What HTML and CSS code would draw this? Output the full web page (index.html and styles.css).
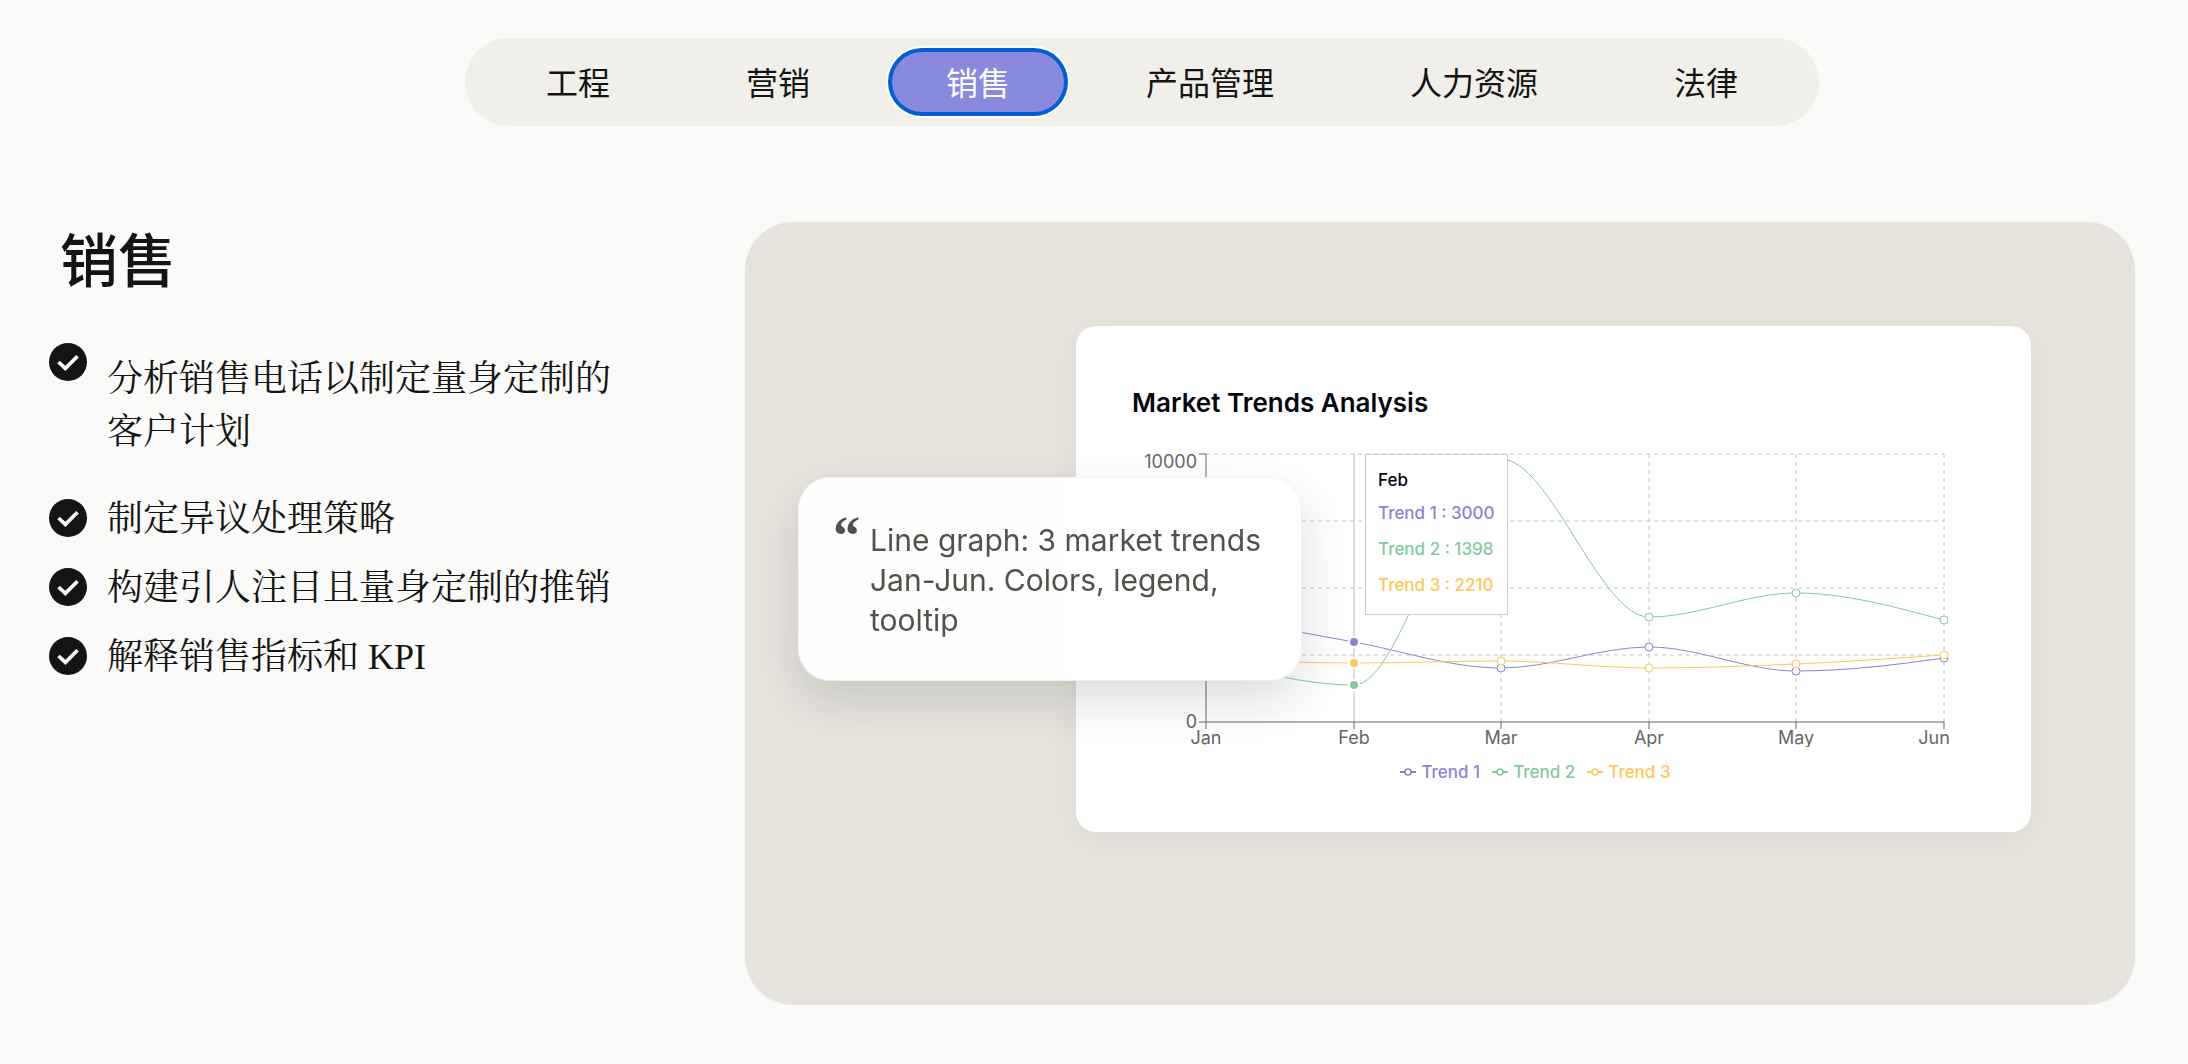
FILE: index.html
```html
<!DOCTYPE html>
<html lang="zh-CN">
<head>
<meta charset="utf-8">
<meta name="viewport" content="width=device-width, initial-scale=1">
<title>销售</title>
<link rel="stylesheet" href="styles.css">
</head>
<body>
<svg class="sprite" aria-hidden="true">
  <symbol id="check" viewBox="0 0 36 36">
    <circle cx="18" cy="18" r="18" fill="#141413"/>
    <path d="M9 18L15.500 24L27 12.500" fill="none" stroke="#fafaf8" stroke-width="3.500"/>
  </symbol>
  <symbol id="key" viewBox="0 0 16 8">
    <path d="M0 4H5M11 4H16" stroke="currentColor" stroke-width="2"/>
    <circle cx="8" cy="4" r="3" fill="none" stroke="currentColor" stroke-width="1.500"/>
  </symbol>
</svg>

<nav class="nav">
  <div class="tabs" role="tablist">
    <button class="tab" role="tab" type="button">工程</button>
    <button class="tab" role="tab" type="button">营销</button>
    <button class="tab tab-active" role="tab" type="button" aria-selected="true">销售</button>
    <button class="tab" role="tab" type="button">产品管理</button>
    <button class="tab" role="tab" type="button">人力资源</button>
    <button class="tab" role="tab" type="button">法律</button>
  </div>
</nav>

<main class="main">
  <section class="intro">
    <h1 class="heading">销售</h1>
    <ul class="list">
      <li class="item"><svg class="check"><use href="#check"/></svg><p class="text text-spaced">分析销售电话以制定量身定制的客户计划</p></li>
      <li class="item"><svg class="check"><use href="#check"/></svg><p class="text">制定异议处理策略</p></li>
      <li class="item"><svg class="check"><use href="#check"/></svg><p class="text">构建引人注目且量身定制的推销</p></li>
      <li class="item"><svg class="check"><use href="#check"/></svg><p class="text">解释销售指标和 KPI</p></li>
    </ul>
  </section>

  <section class="panel">
    <article class="card">
      <h2 class="title">Market Trends Analysis</h2>
      <div class="plot">
        <svg class="chart" viewBox="0 0 843 304" role="img" aria-label="Market Trends Analysis">
          <path class="grid" d="M74 11H812M74 78H812M74 145H812M74 212H812M369 11V279M517 11V279M664 11V279M812 11V279"/>
          <path class="cursor" d="M222 11V279"/>
          <path class="axis" d="M67 11H74V286M67 279H812V286M222 279V286M369 279V286M517 279V286M664 279V286"/>
          <g class="label">
            <text x="65" y="25" text-anchor="end">10000</text>
            <text x="65" y="285" text-anchor="end">0</text>
            <text x="74" y="301" text-anchor="middle">Jan</text>
            <text x="222" y="301" text-anchor="middle">Feb</text>
            <text x="369" y="301" text-anchor="middle">Mar</text>
            <text x="517" y="301" text-anchor="middle">Apr</text>
            <text x="664" y="301" text-anchor="middle">May</text>
            <text x="802" y="301" text-anchor="middle">Jun</text>
          </g>
          <g class="series trend-1">
            <path d="M74 172C123 181 173 190 222 199C271 208 320 225 369 225C418 225 468 204 517 204C566 204 615 228 664 228C713 228 763 222 812 215"/>
            <circle cx="369" cy="225" r="4"/><circle cx="517" cy="204" r="4"/><circle cx="664" cy="228" r="4"/><circle cx="812" cy="215" r="4"/>
          </g>
          <g class="series trend-2">
            <path d="M74 215C123 228 173 242 222 242C271 242 320 16 369 16C418 16 468 174 517 174C566 174 615 150 664 150C713 150 763 164 812 177"/>
            <circle cx="517" cy="174" r="4"/><circle cx="664" cy="150" r="4"/><circle cx="812" cy="177" r="4"/>
          </g>
          <g class="series trend-3">
            <path d="M74 215C123 218 173 220 222 220C271 220 320 218 369 218C418 218 468 225 517 225C566 225 615 223 664 221C713 219 763 215 812 212"/>
            <circle cx="369" cy="218" r="4"/><circle cx="517" cy="225" r="4"/><circle cx="664" cy="221" r="4"/><circle cx="812" cy="212" r="4"/>
          </g>
          <g class="active-dots">
            <circle class="trend-1" cx="222" cy="199" r="5"/>
            <circle class="trend-2" cx="222" cy="242" r="5"/>
            <circle class="trend-3" cx="222" cy="220" r="5"/>
          </g>
        </svg>
        <div class="tooltip">
          <p class="tooltip-title">Feb</p>
          <p class="tooltip-row trend-1">Trend 1 : 3000</p>
          <p class="tooltip-row trend-2">Trend 2 : 1398</p>
          <p class="tooltip-row trend-3">Trend 3 : 2210</p>
        </div>
      </div>
      <ul class="legend">
        <li class="legend-item trend-1"><svg class="key"><use href="#key"/></svg>Trend 1</li>
        <li class="legend-item trend-2"><svg class="key"><use href="#key"/></svg>Trend 2</li>
        <li class="legend-item trend-3"><svg class="key"><use href="#key"/></svg>Trend 3</li>
      </ul>
    </article>
    <blockquote class="quote">
      <span class="mark" aria-hidden="true">“</span>
      <p class="quote-text">Line graph: 3 market trends Jan-Jun. Colors, legend, tooltip</p>
    </blockquote>
  </section>
</main>
</body>
</html>
```
FILE: styles.css
```css
* { box-sizing: border-box; }

body, h1, h2, p, ul, blockquote { margin: 0; padding: 0; }

body {
  background: #fafaf8;
  color: #141413;
  font-family: Inter, "Noto Sans CJK SC", sans-serif;
}

ul { list-style: none; }

.sprite { display: none; }

.nav {
  display: flex;
  justify-content: center;
  padding: 38px 0 0 96px;
}

.tabs {
  display: flex;
  align-items: center;
  gap: 28px;
  height: 88px;
  padding: 0 27px;
  border-radius: 44px;
  background: #f0efea;
}

.tab {
  height: 60px;
  padding: 0 54px 2px;
  border: 0;
  border-radius: 30px;
  background: transparent;
  color: #141413;
  font: 400 32px/48px "Noto Sans CJK SC", sans-serif;
  white-space: nowrap;
}

.tab-active {
  background: #8989de;
  color: #fff;
  box-shadow: 0 0 0 4px #005fd5, 0 0 0 6px #fff;
}

.main {
  display: grid;
  grid-template-columns: 696fr 1390fr;
  align-items: start;
  padding: 96px 53px 56px 49px;
}

.heading {
  padding-left: 11px;
  font: 500 58px/70px "Noto Sans CJK SC", sans-serif;
}

.list {
  display: flex;
  flex-direction: column;
  gap: 14px;
  margin-top: 43px;
}

.item {
  display: flex;
  gap: 20px;
}

.check {
  flex: none;
  width: 38px;
  height: 38px;
  margin-top: 8px;
}

.text {
  max-width: 520px;
  padding-top: 2px;
  font: 400 36px/53px "Liberation Serif", "Noto Serif CJK SC", "Noto Sans CJK SC", serif;
}

.text-spaced { padding: 18px 0; }

.panel {
  position: relative;
  padding: 104px 104px 173px 331px;
  border-radius: 48px;
  background: #e6e4dd;
}

.card {
  padding: 61px 56px 48px;
  border-radius: 20px;
  background: #fff;
  box-shadow: 0 8px 32px rgba(20, 20, 19, 0.05);
}

.title {
  color: #05070f;
  font-size: 26px;
  font-weight: 600;
  line-height: 32px;
}

.plot {
  position: relative;
  margin-top: 24px;
}

.chart {
  display: block;
  width: 100%;
  height: auto;
}

.grid {
  fill: none;
  stroke: #c4c4c4;
  stroke-dasharray: 4 4;
}

.cursor { stroke: #bbb; }

.axis { fill: none; stroke: #666; }

.label { fill: #666; font-size: 18px; }

.trend-1 { color: #8b83d6; }
.trend-2 { color: #82ca9d; }
.trend-3 { color: #ffc658; }

.series path {
  fill: none;
  stroke: currentColor;
}

.series circle {
  fill: #fff;
  stroke: currentColor;
}

.active-dots circle {
  fill: currentColor;
  stroke: #fff;
  stroke-width: 2;
}

.tooltip {
  position: absolute;
  top: 11px;
  left: 233px;
  padding: 10px 12px 11px;
  border: 1px solid #ccc;
  background: #fff;
  font-size: 17px;
  font-weight: 500;
  white-space: nowrap;
}

.tooltip-title {
  color: #05070f;
  line-height: 30px;
}

.tooltip-row { line-height: 36px; }

.legend {
  display: flex;
  justify-content: center;
  gap: 12px;
  margin-top: 13px;
  padding-right: 36px;
  font-size: 17px;
  font-weight: 500;
  line-height: 24px;
}

.legend-item {
  display: flex;
  align-items: center;
  gap: 5px;
}

.key { width: 16px; height: 8px; }

.quote {
  position: absolute;
  top: 255px;
  left: 53px;
  display: flex;
  gap: 10px;
  width: 504px;
  padding: 42px 34px 40px;
  border: 1px solid #f0f0ee;
  border-radius: 32px;
  background: rgba(255, 255, 255, 0.96);
  backdrop-filter: blur(14px);
  box-shadow: 0 20px 48px rgba(20, 20, 19, 0.14);
  color: #52514a;
}

.mark {
  width: 27px;
  font: 700 54px/32px "Liberation Serif", serif;
}

.quote-text {
  flex: 1;
  font: 400 30px/40px Inter, sans-serif;
}
```
